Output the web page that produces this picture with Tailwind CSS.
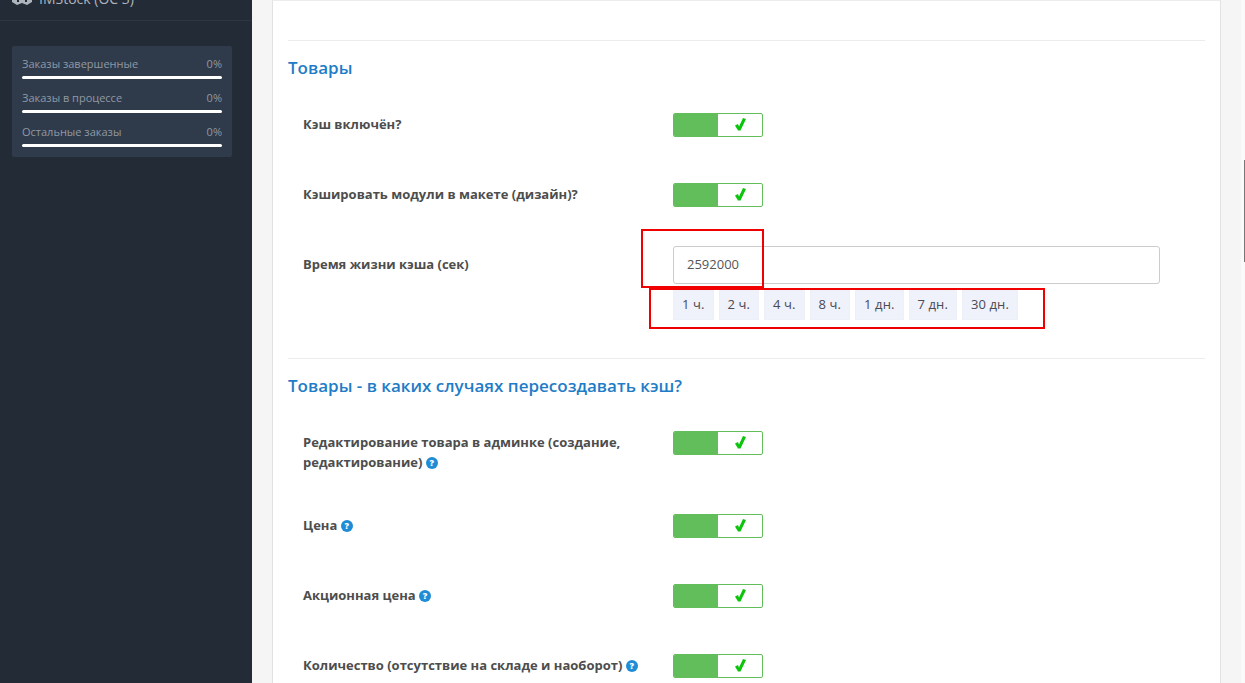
<!DOCTYPE html>
<html lang="ru">
<head>
  <meta charset="UTF-8">
  <title>Кэш</title>
  <script src="https://cdn.jsdelivr.net/npm/@tailwindcss/browser@4"></script>
</head>
<body class="relative h-[683px] overflow-hidden bg-[#f5f5f5] font-['Open_Sans',sans-serif] text-[13px] text-[#4d4d4d]">
  <div class="flex h-[683px]">
    <!-- sidebar -->
    <aside class="w-[252px] shrink-0 bg-[#232b37]">
      <div class="flex h-[21px] items-end overflow-hidden border-b border-[#2d3744] pl-[12px]">
        <div class="mb-[11px] flex items-center gap-[7px] text-[14px] leading-[20px] text-[#aeb4bc]">
          <svg width="20" height="14" viewBox="0 0 20 14" fill="#aeb4bc"><path d="M0 3l5-3 5 2 5-2 5 3v7l-5 3-5-2-5 2-5-3z"/><path d="M5 7h2v3H5zM13 7h2v3h-2z" fill="#232b37"/></svg>
          <span>IMStock (OC 3)</span>
        </div>
      </div>
      <div class="mt-[25px] mr-[20px] ml-[12px] flex h-[111px] flex-col rounded-[2px] bg-[#2f3b4a] px-[10px] pt-[9px] text-[11px] leading-[18px] text-[#8f99a5]">
        <div class="flex justify-between"><span>Заказы завершенные</span><span>0%</span></div>
        <div class="mt-[3px] mb-[10px] h-[3px] rounded-full bg-white"></div>
        <div class="flex justify-between"><span>Заказы в процессе</span><span>0%</span></div>
        <div class="mt-[3px] mb-[10px] h-[3px] rounded-full bg-white"></div>
        <div class="flex justify-between"><span>Остальные заказы</span><span>0%</span></div>
        <div class="mt-[3px] h-[3px] rounded-full bg-white"></div>
      </div>
    </aside>

    <!-- content -->
    <main class="relative min-w-0 flex-1 pr-[24px] pl-[20px]">
      <div class="h-[683px] border-x border-t border-x-[#e2e2e2] border-t-[#ececec] bg-white px-[15px] pt-[39px]">
        <section class="border-t border-[#ececec] pt-[16px]">
          <h2 class="text-[17px] leading-[22px] font-semibold text-[#1f7cc7]">Товары</h2>
          <div class="mt-[34px] flex h-[70px] pl-[15px]">
            <div class="w-[370px] pt-[1px] leading-[20px] font-bold">Кэш включён?</div>
            <div class="flex h-[24px] w-[90px] overflow-hidden rounded-[2px] border border-[#62bd5b] bg-white"><div class="w-[44px] bg-[#62bd5b]"></div><div class="flex flex-1 items-center justify-center pb-[2px]"><svg width="11" height="13" viewBox="0 0 11 13"><path d="M0 7.5L3 6L4 8.5L8 0L11 1L5.5 12.5H3z" fill="#0cc40c"/></svg></div></div>
          </div>
          <div class="flex h-[63px] pl-[15px]">
            <div class="w-[370px] pt-[1px] leading-[20px] font-bold">Кэшировать модули в макете (дизайн)?</div>
            <div class="flex h-[24px] w-[90px] overflow-hidden rounded-[2px] border border-[#62bd5b] bg-white"><div class="w-[44px] bg-[#62bd5b]"></div><div class="flex flex-1 items-center justify-center pb-[2px]"><svg width="11" height="13" viewBox="0 0 11 13"><path d="M0 7.5L3 6L4 8.5L8 0L11 1L5.5 12.5H3z" fill="#0cc40c"/></svg></div></div>
          </div>
          <div class="flex pl-[15px]">
            <div class="w-[370px] pt-[8px] leading-[20px] font-bold">Время жизни кэша (сек)</div>
            <div>
              <div class="flex h-[38px] w-[487px] items-center rounded-[3px] border border-[#cccccc] bg-white pl-[13px] text-[#555]">2592000</div>
              <div class="mt-[6px] flex gap-[5px] leading-[18px] tracking-[0.1px] text-[#4a4a55]">
                <span class="border border-[#eef0f8] bg-[#eff1fb] px-[8px] pt-[4px] pb-[6px]">1 ч.</span>
                <span class="border border-[#eef0f8] bg-[#eff1fb] px-[8px] pt-[4px] pb-[6px]">2 ч.</span>
                <span class="border border-[#eef0f8] bg-[#eff1fb] px-[8px] pt-[4px] pb-[6px]">4 ч.</span>
                <span class="border border-[#eef0f8] bg-[#eff1fb] px-[8px] pt-[4px] pb-[6px]">8 ч.</span>
                <span class="border border-[#eef0f8] bg-[#eff1fb] px-[8px] pt-[4px] pb-[6px]">1 дн.</span>
                <span class="border border-[#eef0f8] bg-[#eff1fb] px-[8px] pt-[4px] pb-[6px]">7 дн.</span>
                <span class="border border-[#eef0f8] bg-[#eff1fb] px-[8px] pt-[4px] pb-[6px]">30 дн.</span>
              </div>
            </div>
          </div>
        </section>

        <section class="mt-[38px] border-t border-[#ececec] pt-[16px]">
          <h2 class="text-[17px] leading-[22px] font-semibold text-[#1f7cc7]">Товары - в каких случаях пересоздавать кэш?</h2>
          <div class="mt-[34px] flex h-[83px] pl-[15px]">
            <div class="w-[370px] pt-[1px] pr-[40px] leading-[20px] font-bold">Редактирование товара в админке (создание, редактирование) <span class="inline-flex h-[12px] w-[12px] items-center justify-center rounded-full bg-[#1f8dd6] align-[1px] text-[9px] leading-none font-extrabold text-white">?</span></div>
            <div class="flex h-[24px] w-[90px] overflow-hidden rounded-[2px] border border-[#62bd5b] bg-white"><div class="w-[44px] bg-[#62bd5b]"></div><div class="flex flex-1 items-center justify-center pb-[2px]"><svg width="11" height="13" viewBox="0 0 11 13"><path d="M0 7.5L3 6L4 8.5L8 0L11 1L5.5 12.5H3z" fill="#0cc40c"/></svg></div></div>
          </div>
          <div class="flex h-[70px] pl-[15px]">
            <div class="w-[370px] pt-[1px] leading-[20px] font-bold">Цена <span class="inline-flex h-[12px] w-[12px] items-center justify-center rounded-full bg-[#1f8dd6] align-[1px] text-[9px] leading-none font-extrabold text-white">?</span></div>
            <div class="flex h-[24px] w-[90px] overflow-hidden rounded-[2px] border border-[#62bd5b] bg-white"><div class="w-[44px] bg-[#62bd5b]"></div><div class="flex flex-1 items-center justify-center pb-[2px]"><svg width="11" height="13" viewBox="0 0 11 13"><path d="M0 7.5L3 6L4 8.5L8 0L11 1L5.5 12.5H3z" fill="#0cc40c"/></svg></div></div>
          </div>
          <div class="flex h-[70px] pl-[15px]">
            <div class="w-[370px] pt-[1px] leading-[20px] font-bold">Акционная цена <span class="inline-flex h-[12px] w-[12px] items-center justify-center rounded-full bg-[#1f8dd6] align-[1px] text-[9px] leading-none font-extrabold text-white">?</span></div>
            <div class="flex h-[24px] w-[90px] overflow-hidden rounded-[2px] border border-[#62bd5b] bg-white"><div class="w-[44px] bg-[#62bd5b]"></div><div class="flex flex-1 items-center justify-center pb-[2px]"><svg width="11" height="13" viewBox="0 0 11 13"><path d="M0 7.5L3 6L4 8.5L8 0L11 1L5.5 12.5H3z" fill="#0cc40c"/></svg></div></div>
          </div>
          <div class="flex h-[70px] pl-[15px]">
            <div class="w-[370px] pt-[1px] leading-[20px] font-bold">Количество (отсутствие на складе и наоборот) <span class="inline-flex h-[12px] w-[12px] items-center justify-center rounded-full bg-[#1f8dd6] align-[1px] text-[9px] leading-none font-extrabold text-white">?</span></div>
            <div class="flex h-[24px] w-[90px] overflow-hidden rounded-[2px] border border-[#62bd5b] bg-white"><div class="w-[44px] bg-[#62bd5b]"></div><div class="flex flex-1 items-center justify-center pb-[2px]"><svg width="11" height="13" viewBox="0 0 11 13"><path d="M0 7.5L3 6L4 8.5L8 0L11 1L5.5 12.5H3z" fill="#0cc40c"/></svg></div></div>
          </div>
        </section>
      </div>
      <!-- scrollbar -->
      <div class="absolute top-0 right-0 h-full w-[4px] bg-[#fafafa]">
        <div class="absolute top-[160px] right-0 h-[102px] w-[1px] bg-[#777]"></div>
      </div>
    </main>
  </div>

  <!-- red annotation frames over the screenshot -->
  <div class="absolute top-[229px] left-[641px] h-[59px] w-[123px] border-2 border-[#f00000]"></div>
  <div class="absolute top-[288px] left-[649px] h-[41px] w-[396px] border-2 border-[#f00000]"></div>
</body>
</html>
